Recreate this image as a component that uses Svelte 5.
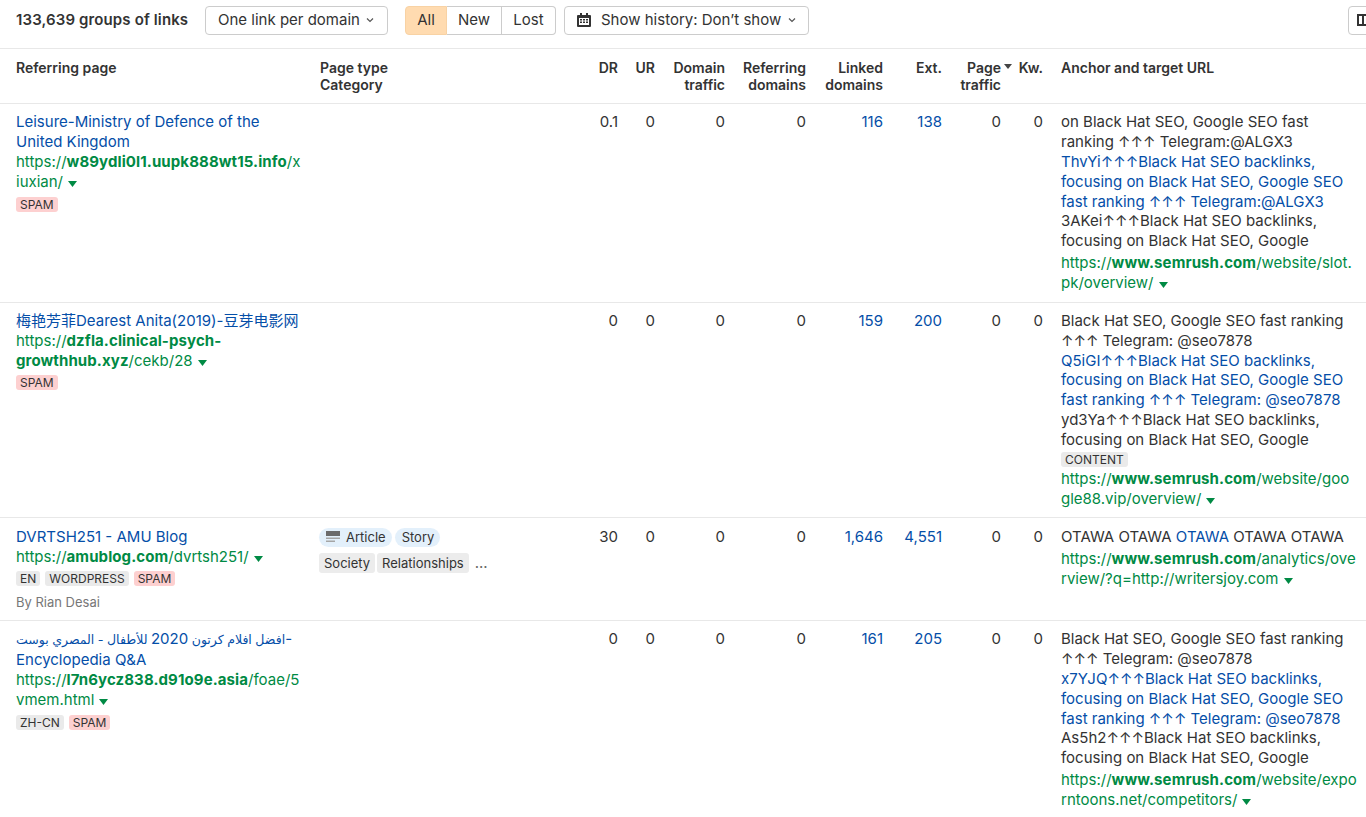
<script>
	const rows = [
		{
			title: 'Leisure-Ministry of Defence of the United Kingdom',
			url: ['https://', 'w89ydli0l1.uupk888wt15.info', '/xiuxian/'],
			tags: [{ label: 'SPAM', spam: true }],
			dr: '0.1', linked: '116', ext: '138',
			anchor: [
				{ text: 'on Black Hat SEO, Google SEO fast ranking ↑↑↑ Telegram:@ALGX3\n' },
				{ text: 'ThvYi↑↑↑Black Hat SEO backlinks, focusing on Black Hat SEO, Google SEO fast ranking ↑↑↑ Telegram:@ALGX3\n', link: true },
				{ text: '3AKei↑↑↑Black Hat SEO backlinks, focusing on Black Hat SEO, Google' }
			],
			target: ['https://', 'www.semrush.com', '/website/slot.pk/overview/']
		},
		{
			title: '梅艳芳菲Dearest Anita(2019)-豆芽电影网',
			url: ['https://', 'dzfla.clinical-psych-growthhub.xyz', '/cekb/28'],
			tags: [{ label: 'SPAM', spam: true }],
			dr: '0', linked: '159', ext: '200',
			anchor: [
				{ text: 'Black Hat SEO, Google SEO fast ranking ↑↑↑ Telegram: @seo7878\n' },
				{ text: 'Q5iGI↑↑↑Black Hat SEO backlinks, focusing on Black Hat SEO, Google SEO fast ranking ↑↑↑ Telegram: @seo7878\n', link: true },
				{ text: 'yd3Ya↑↑↑Black Hat SEO backlinks, focusing on Black Hat SEO, Google' }
			],
			anchorTag: 'CONTENT',
			target: ['https://', 'www.semrush.com', '/website/google88.vip/overview/']
		},
		{
			title: 'DVRTSH251 - AMU Blog',
			url: ['https://', 'amublog.com', '/dvrtsh251/'],
			tags: [{ label: 'EN' }, { label: 'WORDPRESS' }, { label: 'SPAM', spam: true }],
			author: 'By Rian Desai',
			types: true,
			dr: '30', linked: '1,646', ext: '4,551',
			anchor: [
				{ text: 'OTAWA OTAWA ' },
				{ text: 'OTAWA', link: true },
				{ text: ' OTAWA OTAWA' }
			],
			target: ['https://', 'www.semrush.com', '/analytics/overview/?q=http://writersjoy.com']
		},
		{
			arabic: ['افضل افلام كرتون ', '2020', ' للأطفال - المصري بوست'],
			title: '-Encyclopedia Q&A',
			url: ['https://', 'l7n6ycz838.d91o9e.asia', '/foae/5vmem.html'],
			tags: [{ label: 'ZH-CN' }, { label: 'SPAM', spam: true }],
			dr: '0', linked: '161', ext: '205',
			anchor: [
				{ text: 'Black Hat SEO, Google SEO fast ranking ↑↑↑ Telegram: @seo7878\n' },
				{ text: 'x7YJQ↑↑↑Black Hat SEO backlinks, focusing on Black Hat SEO, Google SEO fast ranking ↑↑↑ Telegram: @seo7878\n', link: true },
				{ text: 'As5h2↑↑↑Black Hat SEO backlinks, focusing on Black Hat SEO, Google' }
			],
			target: ['https://', 'www.semrush.com', '/website/exporntoons.net/competitors/']
		}
	];
</script>

{#snippet chevron()}
	<svg class="chevron" width="8" height="6" viewBox="0 0 8 6"><path d="M1 1.500 4 4.500 7 1.500" fill="none" stroke="currentColor" stroke-width="1.200" /></svg>
{/snippet}

{#snippet greenUrl(parts)}
	<a class="url" href="#top">{parts[0]}<b>{parts[1]}</b>{parts[2]}<svg class="caret" width="9" height="6" viewBox="0 0 9 6"><path d="M0 0h9L4.500 6z" fill="currentColor" /></svg></a>
{/snippet}

<div class="page">
	<div class="toolbar">
		<span class="count">133,639 groups of links</span>
		<button class="btn group-btn">One link per domain {@render chevron()}</button>
		<div class="segments">
			<button class="seg active">All</button>
			<button class="seg">New</button>
			<button class="seg">Lost</button>
		</div>
		<button class="btn history-btn">
			<svg width="14" height="14" viewBox="0 0 14 14"><path fill="#333" fill-rule="evenodd" d="M3 0h2v2h4V0h2v2h2a1 1 0 0 1 1 1v10a1 1 0 0 1-1 1H1a1 1 0 0 1-1-1V3a1 1 0 0 1 1-1h2zM2 5v7h10V5zm1 1h2v1.500H3zm3 0h2v1.500H6zm3 0h2v1.500H9zM3 8.500h2V10H3zm3 0h2V10H6zm3 0h2V10H9z" /></svg>
			Show history: Don’t show {@render chevron()}
		</button>
		<button class="btn columns-btn" aria-label="Columns">
			<svg width="14" height="14" viewBox="0 0 14 14"><path fill="#333" fill-rule="evenodd" d="M0 1h14v12H0zm2 2v8h3V3zm5 0v8h5V3z" /></svg>
		</button>
	</div>

	<table>
		<colgroup>
			<col style="width:312px" /><col style="width:274px" /><col style="width:40px" /><col style="width:37px" />
			<col style="width:70px" /><col style="width:81px" /><col style="width:77px" /><col style="width:59px" />
			<col style="width:59px" /><col style="width:44px" /><col />
		</colgroup>
		<thead>
			<tr>
				<th class="first">Referring page</th>
				<th>Page type<br />Category</th>
				<th class="num">DR</th>
				<th class="num">UR</th>
				<th class="num">Domain<br />traffic</th>
				<th class="num">Referring<br />domains</th>
				<th class="num">Linked<br />domains</th>
				<th class="num">Ext.</th>
				<th class="num"><span class="sorted">Page<svg class="sort" width="8" height="5" viewBox="0 0 8 5"><path d="M0 0h8L4 5z" fill="currentColor" /></svg></span><br />traffic</th>
				<th class="num kw">Kw.</th>
				<th class="anchor">Anchor and target URL</th>
			</tr>
		</thead>
		<tbody>
			{#each rows as row}
				<tr>
					<td class="first">
						<a class="title" href="#top">{#if row.arabic}<span class="ar">{row.arabic[0]}</span>{row.arabic[1]}<span class="ar">{row.arabic[2]}</span>{/if}{row.title}</a>
						{@render greenUrl(row.url)}
						<div class="tags">
							{#each row.tags as tag}
								<span class="tag" class:spam={tag.spam}>{tag.label}</span>
							{/each}
						</div>
						{#if row.author}
							<div class="author">{row.author}</div>
						{/if}
					</td>
					<td>
						{#if row.types}
							<div class="pills">
								<span class="pill">
									<svg width="14" height="12" viewBox="0 0 14 12"><path fill="#6b6b6b" d="M0 0h14v5H0z" /><path fill="#a5a5a5" d="M0 6.500h14V8H0zM0 9.500h9V11H0z" /></svg>
									Article
								</span>
								<span class="pill">Story</span>
							</div>
							<div class="cats">
								<span class="cat">Society</span>
								<span class="cat">Relationships</span>
								<span class="more">...</span>
							</div>
						{/if}
					</td>
					<td class="num">{row.dr}</td>
					<td class="num">0</td>
					<td class="num">0</td>
					<td class="num">0</td>
					<td class="num"><a href="#top">{row.linked}</a></td>
					<td class="num"><a href="#top">{row.ext}</a></td>
					<td class="num">0</td>
					<td class="num kw">0</td>
					<td class="anchor">
						<div class="anchor-text">{#each row.anchor as part}{#if part.link}<a href="#top">{part.text}</a>{:else}{part.text}{/if}{/each}</div>
						{#if row.anchorTag}
							<div class="anchor-tag"><span class="tag">{row.anchorTag}</span></div>
						{/if}
						<div class="target">{@render greenUrl(row.target)}</div>
					</td>
				</tr>
			{/each}
		</tbody>
	</table>
</div>

<style>
	:global(body) {
		margin: 0;
		background: #fff;
	}

	.page {
		width: 1366px;
		height: 817px;
		overflow: hidden;
		color: #333;
		font-family: Inter, 'Noto Sans CJK SC', 'DejaVu Sans', sans-serif;
		font-size: 15px;
		line-height: 19.8px;
	}

	a {
		color: #044ea8;
		text-decoration: none;
	}

	.toolbar {
		display: flex;
		align-items: center;
		height: 40px;
		padding: 0 0 8px 16px;
		border-bottom: 1px solid #e8e8e8;
	}

	.toolbar > * {
		flex-shrink: 0;
	}

	.count {
		font-weight: 600;
		letter-spacing: 0.13px;
		white-space: nowrap;
		width: 172px;
		margin-right: 17px;
	}

	.btn,
	.seg {
		font: inherit;
		color: #333;
		background: #fff;
		height: 29px;
		padding: 0;
		cursor: pointer;
	}

	.btn {
		display: flex;
		align-items: center;
		border: 1px solid #ccc;
		border-radius: 4px;
	}

	.group-btn {
		width: 183px;
		padding-left: 12px;
		gap: 6px;
		margin-right: 17px;
	}

	.chevron {
		color: #555;
	}

	.segments {
		display: flex;
		margin-right: 8px;
	}

	.seg {
		border: 1px solid #ccc;
		border-left: 0;
		width: 55px;
	}

	.seg:first-child {
		width: 42px;
		border-left: 1px solid #ffdbb0;
		border-radius: 4px 0 0 4px;
	}

	.seg:last-child {
		width: 54px;
		border-radius: 0 4px 4px 0;
	}

	.seg.active {
		background: #ffdbb0;
		border-color: #f8d2a4;
	}

	.history-btn {
		width: 245px;
		padding-left: 12px;
		gap: 10px;
	}

	.history-btn .chevron {
		margin-left: -3px;
	}

	.columns-btn {
		width: 32px;
		margin-left: 539px;
		justify-content: center;
	}

	table {
		width: 1366px;
		table-layout: fixed;
		border-collapse: collapse;
	}

	th {
		padding: 10px 8px;
		font-size: 14px;
		font-weight: 600;
		text-align: left;
		vertical-align: top;
		line-height: 17px;
		border-bottom: 1px solid #e8e8e8;
	}

	td {
		padding: 8.4px 8px 8.6px;
		vertical-align: top;
		border-bottom: 1px solid #e8e8e8;
	}

	td.first {
		padding-left: 16px;
		padding-right: 9.5px;
	}

	td.anchor {
		padding-right: 8.5px;
	}

	th.first {
		padding-left: 16px;
	}

	.num {
		text-align: right;
	}

	.kw {
		padding-left: 0;
		padding-right: 10px;
	}

	.sorted {
		position: relative;
	}

	.sort {
		position: absolute;
		left: 100%;
		top: 5px;
		margin-left: 3px;
		color: #444;
	}

	.title,
	.url {
		display: block;
	}

	.ar {
		font-size: 12.5px;
	}

	.url {
		color: #008a44;
		overflow-wrap: anywhere;
	}

	.url b {
		letter-spacing: 0.1px;
	}

	.caret {
		margin-left: 5px;
		vertical-align: 0;
	}

	.tags {
		display: flex;
		gap: 5px;
		margin-top: 5px;
	}

	.tag {
		display: inline-block;
		padding: 0 4px;
		font-size: 12px;
		line-height: 15px;
		background: #eaeaea;
		border-radius: 3px;
	}

	.tag.spam {
		background: #fdd0d0;
	}

	.author {
		margin-top: 7px;
		font-size: 13px;
		line-height: 18px;
		color: #777;
	}

	.pills,
	.cats {
		display: flex;
		align-items: center;
		margin-left: -1px;
	}

	.pills {
		gap: 3px;
		margin-top: 1px;
	}

	.cats {
		gap: 2px;
		margin-top: 6px;
	}

	.pill {
		display: inline-flex;
		align-items: center;
		gap: 6px;
		padding: 0 6px 0 7px;
		line-height: 19px;
		background: #e3f0fb;
		border-radius: 10px;
		font-size: 13px;
	}

	.cat {
		padding: 0 5px;
		line-height: 20px;
		background: #ececec;
		border-radius: 3px;
		font-size: 13px;
	}

	.more {
		margin-left: 4px;
		color: #666;
	}

	.anchor-text {
		white-space: pre-line;
	}

	.anchor-tag {
		display: flex;
		margin-top: 2.4px;
	}

	.target {
		margin-top: 2.4px;
	}
</style>
